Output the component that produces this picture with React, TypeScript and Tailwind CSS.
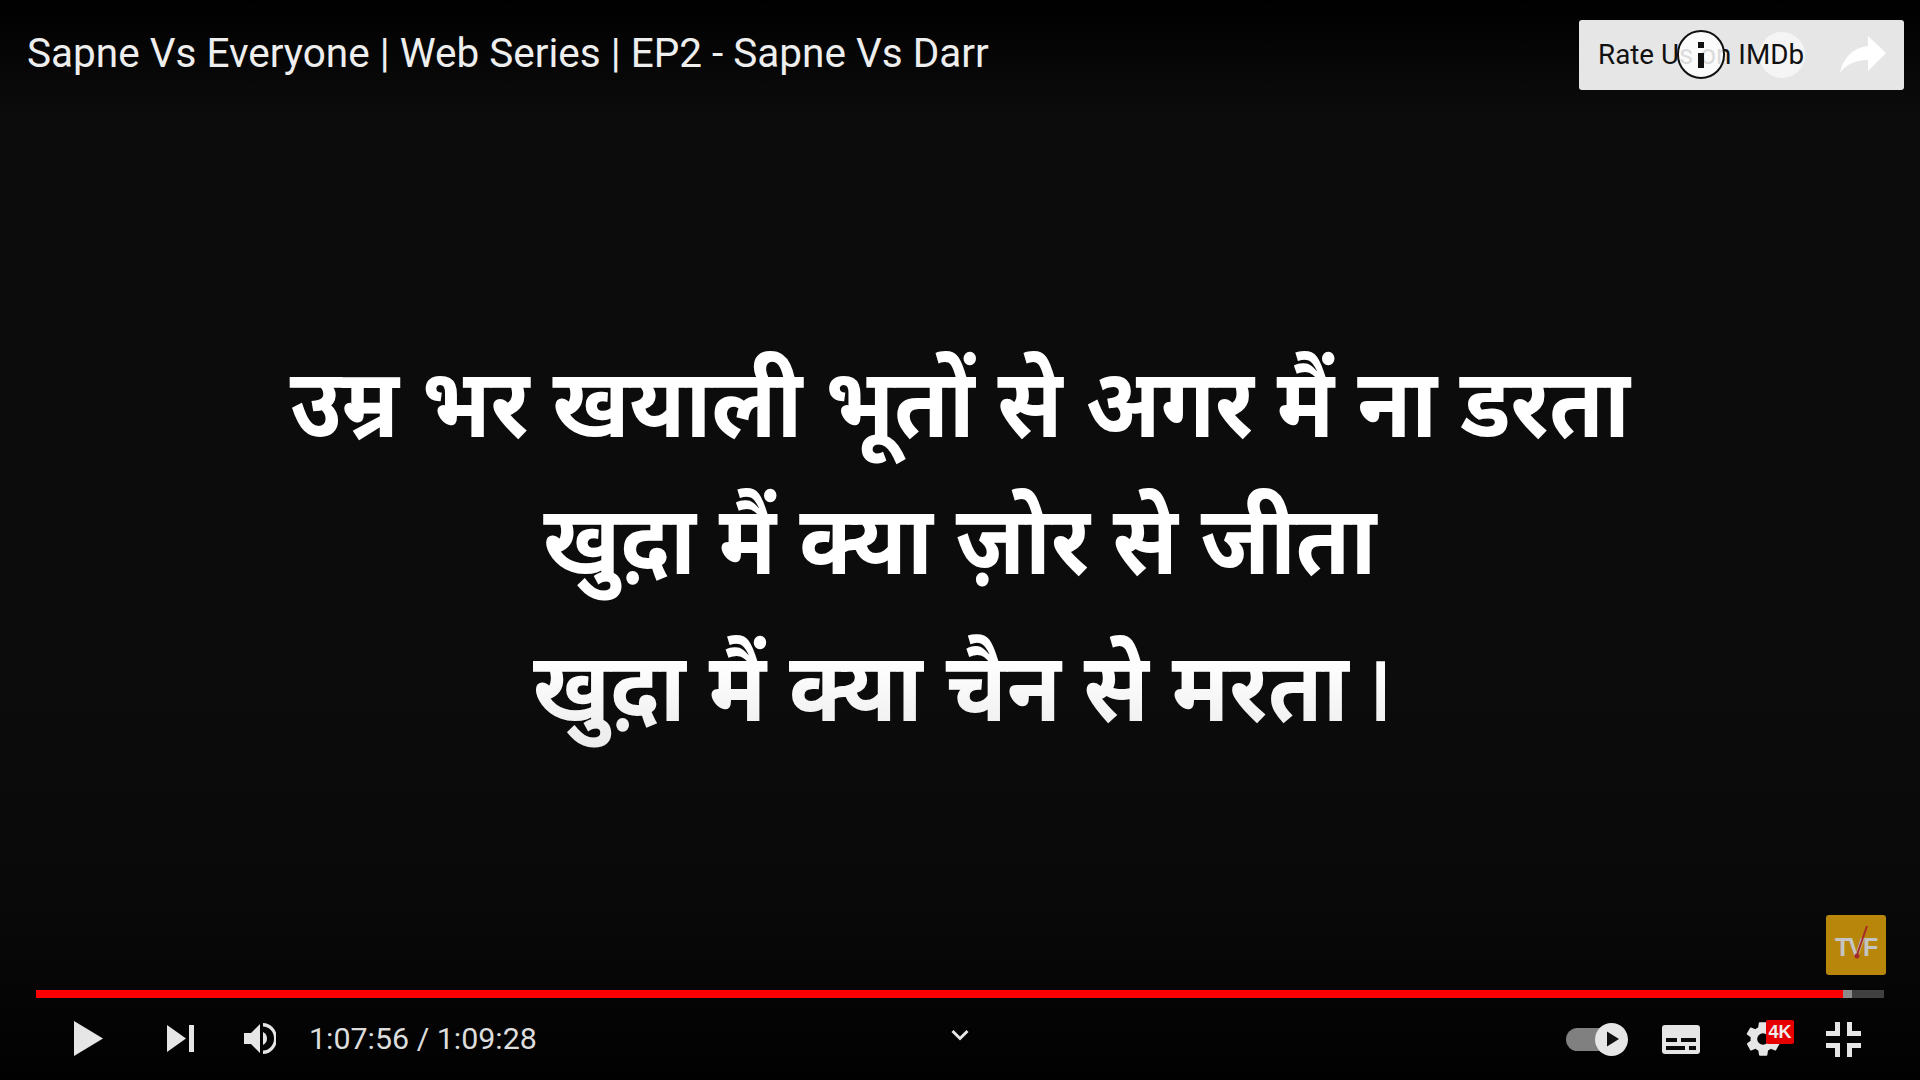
export default function App() {
  return (
    <div className="relative flex h-screen w-full flex-col overflow-hidden bg-[#0c0c0c] font-['Roboto',sans-serif] text-[#eeeeee]">
      <div className="pointer-events-none absolute inset-x-0 top-0 h-[120px] bg-gradient-to-b from-[#000000] to-transparent" />

      <header className="relative flex h-[110px] items-start justify-between pl-[27px] pr-4 pt-5">
        <h1 className="text-[40.5px] leading-[66px] font-normal text-[#eeeeee]">Sapne Vs Everyone | Web Series | EP2 - Sapne Vs Darr</h1>
        <div className="relative flex h-[70px] w-[325px] items-center rounded-[3px] bg-[#e6e6e6] pl-[19px] text-[27.8px] text-[#111111]">
          <span className="absolute left-[180px] top-[12px] h-[46px] w-[46px] rounded-full bg-white/60" />
          <span className="relative">Rate Us on IMDb</span>
          <span className="absolute left-[98px] top-[10px] flex h-[49px] w-[48px] items-center justify-center rounded-full border-2 border-[#111111] bg-white/85">
            <svg viewBox="0 0 6 26" className="h-[26px] w-[6px]"><rect x="0" y="0" width="6" height="6" fill="#111" /><rect x="0" y="11" width="6" height="15" fill="#111" /></svg>
          </span>
          <svg viewBox="0 0 46 38" className="absolute left-[261px] top-4 h-[38px] w-[46px]"><path d="M28 0 L46 17 L28 35 V24 C16 24 6 28 0 37 C3 22 12 12 28 10 Z" fill="#ffffff" /></svg>
        </div>
      </header>

      <main className="relative flex flex-1 flex-col items-center pt-[234px] font-['Noto_Sans_Devanagari','Lohit_Devanagari','Noto_Sans',sans-serif] text-[96px] font-bold leading-[140px] text-white">
        <p className="scale-x-[0.918]">उम्र भर खयाली भूतों से अगर मैं ना डरता</p>
        <p className="-mt-[3px] scale-x-[0.918]">खुद़ा मैं क्या ज़ोर से जीता</p>
        <p className="mt-[7px] scale-x-[0.918] pl-[8px]">खुद़ा मैं क्या चैन से मरता<span className="ml-3 font-medium">।</span></p>
      </main>

      <div className="pointer-events-none absolute inset-x-0 bottom-0 h-[420px] bg-[linear-gradient(to_top,rgba(0,0,0,0.9),rgba(0,0,0,0.25)_180px,rgba(0,0,0,0.07)_340px,transparent_420px)]" />

      <footer className="relative">
        <div className="flex justify-end pr-[34px]">
          <div className="flex h-[60px] w-[60px] items-center justify-center rounded-[3px] bg-[#b8860b]">
            <svg viewBox="0 0 60 60" className="h-[60px] w-[60px]">
              <text x="9" y="41" fontFamily="Liberation Sans" fontWeight="700" fontSize="25" fill="#c4c4c4" letterSpacing="-2">TVF</text>
              <path d="M41 11 L31 40" stroke="#a52a2a" strokeWidth="2" />
              <circle cx="31" cy="41" r="2.5" fill="#a52a2a" />
            </svg>
          </div>
        </div>
        <div className="ml-9 mr-9 mt-[15px] flex h-2 bg-[#404040]">
          <div className="w-[1807px] bg-[#ff0000]" />
          <div className="w-[9px] bg-[#8c8c8c]" />
        </div>
        <div className="relative flex h-[82px] items-center justify-between pl-[74px] pr-[59px]">
          <div className="flex items-center">
            <svg viewBox="0 0 29 35" className="h-[35px] w-[29px]"><path d="M0 0 L29 17.5 L0 35 Z" fill="#e6e6e6" /></svg>
            <svg viewBox="0 0 27 27" className="ml-[64px] h-[27px] w-[27px]"><path d="M0 0 L19 13.5 L0 27 Z" fill="#e6e6e6" /><rect x="22" y="0" width="5" height="27" fill="#e6e6e6" /></svg>
            <svg viewBox="0 0 32 31" className="ml-[50px] h-[31px] w-[32px]">
              <path d="M0 10 H7 L16 1 V30 L7 21 H0 Z" fill="#e6e6e6" />
              <path d="M19 9 A8 7.5 0 0 1 19 22 Z" fill="#e6e6e6" />
              <path d="M19 0 A14 15.5 0 0 1 19 31 V27.5 A11 12 0 0 0 19 3.5 Z" fill="#e6e6e6" />
            </svg>
            <span className="ml-[33px] text-[30.4px] text-[#dddddd]">1:07:56 / 1:09:28</span>
          </div>
          <svg viewBox="0 0 18 12" className="absolute left-[951px] top-[31px] h-3 w-[18px]"><path d="M1.5 2 L9 9.5 L16.5 2" fill="none" stroke="#e6e6e6" strokeWidth="3" /></svg>
          <div className="flex items-center">
            <div className="relative h-[33px] w-[62px]">
              <span className="absolute left-0 top-[5px] h-[23px] w-[50px] rounded-full bg-[#808080]" />
              <span className="absolute right-0 top-0 flex h-[33px] w-[33px] items-center justify-center rounded-full bg-[#e6e6e6]">
                <svg viewBox="0 0 13 16" className="ml-0.5 h-4 w-3"><path d="M0 0 L13 8 L0 16 Z" fill="#111" /></svg>
              </span>
            </div>
            <svg viewBox="0 0 38 29" className="ml-[34px] h-[29px] w-[38px]">
              <rect width="38" height="29" rx="3" fill="#e6e6e6" />
              <rect x="4" y="13" width="11" height="4" fill="#0a0a0a" /><rect x="19" y="13" width="15" height="4" fill="#0a0a0a" />
              <rect x="4" y="21" width="19" height="4" fill="#0a0a0a" /><rect x="27" y="21" width="7" height="4" fill="#0a0a0a" />
            </svg>
            <div className="relative ml-[46px] h-[36px] w-[48px]">
              <svg viewBox="0 0 24 24" className="absolute left-[-3px] top-[-2px] h-[40px] w-[40px]"><path fill="#e6e6e6" d="M19.4 13a7.6 7.6 0 0 0 0-2l2.1-1.6a.5.5 0 0 0 .1-.6l-2-3.5a.5.5 0 0 0-.6-.2l-2.5 1a7.3 7.3 0 0 0-1.7-1l-.4-2.6A.5.5 0 0 0 14 2h-4a.5.5 0 0 0-.5.4l-.4 2.7a7.3 7.3 0 0 0-1.7 1l-2.5-1a.5.5 0 0 0-.6.2l-2 3.4a.5.5 0 0 0 .1.6L4.6 11a7.6 7.6 0 0 0 0 2l-2.1 1.6a.5.5 0 0 0-.1.6l2 3.5c.1.2.4.3.6.2l2.5-1c.5.4 1.1.7 1.7 1l.4 2.6c0 .3.2.5.5.5h4c.3 0 .5-.2.5-.4l.4-2.7c.6-.3 1.2-.6 1.7-1l2.5 1c.2.1.5 0 .6-.2l2-3.5a.5.5 0 0 0-.1-.6zM12 15.5a3.5 3.5 0 1 1 0-7 3.5 3.5 0 0 1 0 7z" /></svg>
              <span className="absolute left-[20px] top-[-1px] flex h-6 w-7 items-center justify-center rounded-[2px] bg-[#e60000] font-['Liberation_Sans',sans-serif] text-[18px] font-bold text-[#eeeeee]">4K</span>
            </div>
            <svg viewBox="0 0 35 35" className="ml-[32px] h-[35px] w-[35px]">
              <path fill="#e6e6e6" d="M9 0 H14 V14 H0 V9 H9 Z M21 0 H26 V9 H35 V14 H21 Z M0 21 H14 V35 H9 V26 H0 Z M21 21 H35 V26 H26 V35 H21 Z" />
            </svg>
          </div>
        </div>
      </footer>
    </div>
  );
}
